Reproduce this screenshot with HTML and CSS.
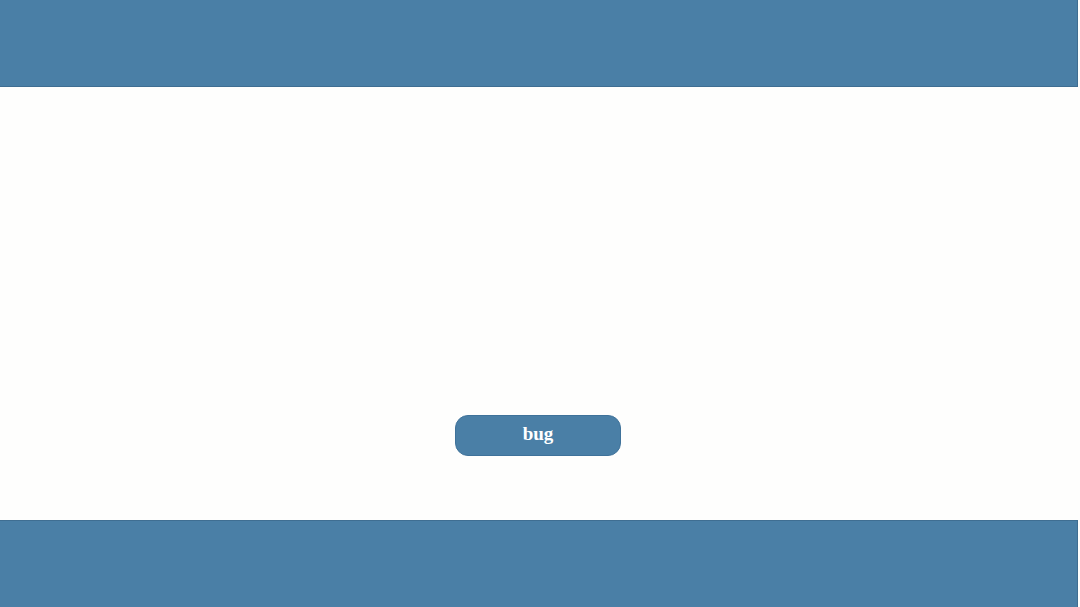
FILE: index.html
```html
<!DOCTYPE html>
<html>
<head>
<meta charset="utf-8">
<link rel="stylesheet" href="styles.css">
</head>
<body>
<header class="top-bar"></header>
<main class="content">
  <button class="bug-btn">bug</button>
</main>
<footer class="bottom-bar"></footer>
</body>
</html>
```
FILE: styles.css
```css
html, body {
  margin: 0;
  padding: 0;
  height: 100%;
}
body {
  display: flex;
  flex-direction: column;
  background: #fefefd;
  font-family: "Liberation Serif", serif;
  overflow: hidden;
}
.top-bar {
  height: 86px;
  flex: none;
  background: #4a7fa6;
  border-bottom: 1px solid #3f6e92;
  border-right: 1px solid #3f6e92;
  margin-right: 2px;
}
.content {
  flex: 1;
  display: flex;
  justify-content: center;
  align-items: flex-start;
  padding-top: 328px;
  padding-right: 4px;
}
.bug-btn {
  width: 166px;
  height: 41px;
  background: #4a7fa6;
  color: #ffffff;
  border: 1px solid #3f729a;
  border-radius: 13px;
  font-family: "Liberation Serif", serif;
  font-size: 19px;
  font-weight: bold;
  padding: 0 0 3px 0;
}
.bottom-bar {
  height: 86px;
  flex: none;
  background: #4a7fa6;
  border-top: 1px solid #3f6e92;
  border-right: 1px solid #3f6e92;
  margin-right: 2px;
}
```
